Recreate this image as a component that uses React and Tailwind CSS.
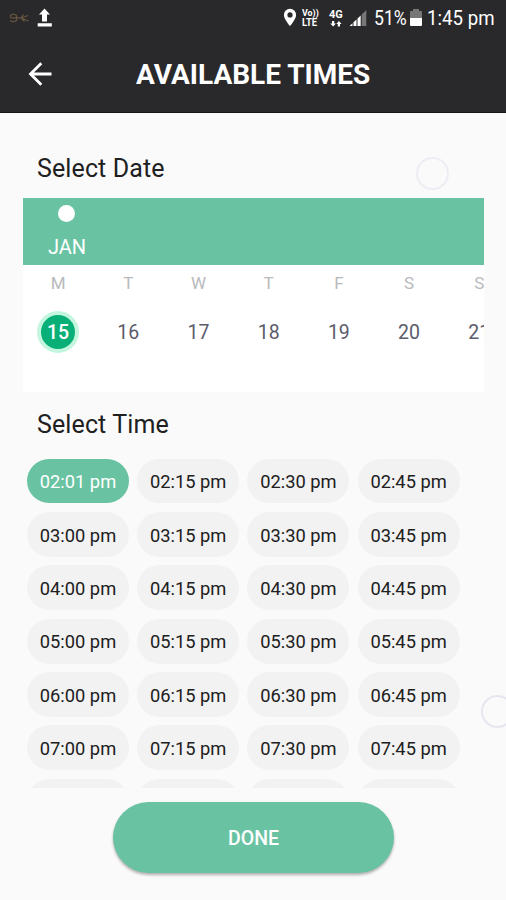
import clsx from "clsx";

const days = [
	{ name: "M", date: 15 },
	{ name: "T", date: 16 },
	{ name: "W", date: 17 },
	{ name: "T", date: 18 },
	{ name: "F", date: 19 },
	{ name: "S", date: 20 },
	{ name: "S", date: 21 },
];

const hours = ["02", "03", "04", "05", "06", "07", "08"];
const times = hours.flatMap((h) =>
	["00", "15", "30", "45"].map((m) => `${h}:${h === "02" && m === "00" ? "01" : m} pm`)
);

const StatusBar = () => (
	<div className="flex h-9 items-center text-white">
		<svg className="ml-[8px] h-[10px] w-[22px]" viewBox="0 0 22 10" fill="none" stroke="#695640" strokeWidth="1.2">
			<path d="M2.5 4.5V2.5Q5-.2 8.5 2.5V7.5Q5 10 2 7.5M2.5 4.8H12M20 2.5L13 5L20.5 8M15.5 1.5L13 5L16.5 8.5" />
		</svg>
		<svg className="ml-[7px] h-[20px] w-[15px]" viewBox="0 0 15 20" fill="#fff">
			<path d="M7.5 .5L13 6.5H10V13.5H5V6.5H2ZM.7 15.3H14.8V18.5H.7Z" />
		</svg>
		<div className="flex-1" />
		<svg className="mr-[1px] h-[20px] w-[14px]" viewBox="0 0 14 20" fill="#fff">
			<path fillRule="evenodd" d="M7 .8A6.1 6.1 0 0 0 .9 6.9C.9 11 7 18 7 18S13.1 11 13.1 6.9A6.1 6.1 0 0 0 7 .8ZM7 4.3A2.6 2.6 0 1 1 7 9.5A2.6 2.6 0 0 1 7 4.3Z" />
		</svg>
		<div className="ml-[4px] w-[18px] text-[9px] leading-[9px] font-bold">
			<div className="w-max origin-left scale-x-[0.98]">Vo))</div>
			<div className="w-max origin-left text-[10px] scale-x-[0.94]">LTE</div>
		</div>
		<div className="ml-[9px] w-[15px]">
			<div className="text-[11px] leading-[10px] font-bold">4G</div>
			<svg className="h-[7px] w-[15px]" viewBox="0 0 15 7" fill="#fff">
				<path d="M3 1H5.2V3.5H7L4.1 6.5L1.2 3.5H3ZM8.8 6.5V4H7.3L9.9 1L12.6 4H11V6.5Z" />
			</svg>
		</div>
		<svg className="ml-[5px] h-[18px] w-[18px]" viewBox="0 0 18 18">
			<path fill="#fff" d="M.5 17L3.5 14.2V17ZM4.5 13.2L7.5 10.4V17H4.5ZM8.5 9.4L11.7 6.4V17H8.5Z" />
			<path fill="#777" d="M12.7 5.4L17.3 1V17H12.7Z" />
		</svg>
		<div className="ml-[7px] w-[33px] text-[21px] leading-9 whitespace-nowrap">
			<div className="w-max origin-left scale-x-[0.84]">51%</div>
		</div>
		<svg className="ml-[3px] h-[18px] w-[12px]" viewBox="0 0 12 18">
			<path fill="#777" d="M3 0H9V2H11Q12 2 12 3V9H0V3Q0 2 1 2H3Z" />
			<path fill="#fff" d="M0 9H12V16Q12 17 11 17H1Q0 17 0 16Z" />
		</svg>
		<div className="ml-[5px] w-[79px] text-[21px] leading-9 whitespace-nowrap">
			<div className="w-max origin-left scale-x-[0.89]">1:45 pm</div>
		</div>
	</div>
);

const Header = () => (
	<div className="flex h-[76px] items-center">
		<svg className="ml-[28px] h-[24px] w-[24px]" viewBox="0 0 24 24" fill="none" stroke="#fff" strokeWidth="2.8">
			<path d="M23.5 12H2.5M13.3 1.3L2.5 12L13.3 22.7" />
		</svg>
		<h1 className="ml-[84px] pt-[2px] text-[28px] leading-9 font-bold whitespace-nowrap text-white">AVAILABLE TIMES</h1>
	</div>
);

const Calendar = () => (
	<div className="ml-[23px] h-[194px] w-[461px] overflow-hidden bg-white">
		<div className="h-[67px] bg-[#69c3a2] pt-[7px]">
			<div className="ml-[35px] h-[17px] w-[17px] rounded-full bg-white" />
			<div className="mt-[13px] ml-[25px] text-[20px] leading-6 text-white">JAN</div>
		</div>
		<div className="flex">
			{days.map((day, i) => (
				<div key={day.date} className="flex w-[70.2px] shrink-0 flex-col items-center">
					<div className="mt-[8px] text-[17px] leading-5 text-[#b8babd]">{day.name}</div>
					<div
						className={clsx(
							"mt-[18px] flex h-[42px] w-[42px] items-center justify-center rounded-full pt-[2px] text-[19.5px]",
							i === 0 ? "border-4 border-[#c4f5df] bg-[#08b078] font-medium text-white" : "text-[#5b5c6b]"
						)}
					>
						{day.date}
					</div>
				</div>
			))}
		</div>
	</div>
);

const App = () => (
	<div className="relative h-[900px] w-[506px] overflow-hidden bg-[#fafafa] font-['Roboto',sans-serif]">
		<div className="h-[113px] border-b border-[#161617] bg-[#29292b]">
			<StatusBar />
			<Header />
		</div>

		<h2 className="mt-[40px] ml-[37px] text-[25px] leading-8 tracking-[0.12px] text-[#202020]">Select Date</h2>
		<div className="mt-[13px]">
			<Calendar />
		</div>

		<h2 className="mt-[17px] ml-[37px] text-[25px] leading-8 tracking-[0.12px] text-[#202020]">Select Time</h2>
		<div className="mt-[17.5px] ml-[27px] grid h-[329.5px] grid-cols-[repeat(4,102px)] content-start gap-x-[8.2px] gap-y-[8.5px] overflow-hidden">
			{times.map((time, i) => (
				<div
					key={time}
					className={clsx(
						"flex h-[44.9px] items-center justify-center rounded-full pt-[2px] text-[18.3px] whitespace-nowrap",
						i === 0 ? "bg-[#69c3a2] text-white" : "bg-[#f2f2f2] text-[#202020]"
					)}
				>
					{time}
				</div>
			))}
		</div>

		<button className="mt-[14px] ml-[113px] flex h-[70.5px] w-[281px] items-center justify-center rounded-full bg-[#69c3a2] pt-[2px] text-[19.5px] font-medium text-white shadow-[0_2px_3px_rgba(0,0,0,0.3)]">
			DONE
		</button>

		{/* floating bubbles */}
		<div className="absolute top-[157px] left-[416px] h-[33px] w-[33px] rounded-full border-2 border-[#ededf3]" />
		<div className="absolute top-[695px] left-[481px] h-[33px] w-[33px] rounded-full border-2 border-[#e6e6f0]" />
	</div>
);

export default App;
